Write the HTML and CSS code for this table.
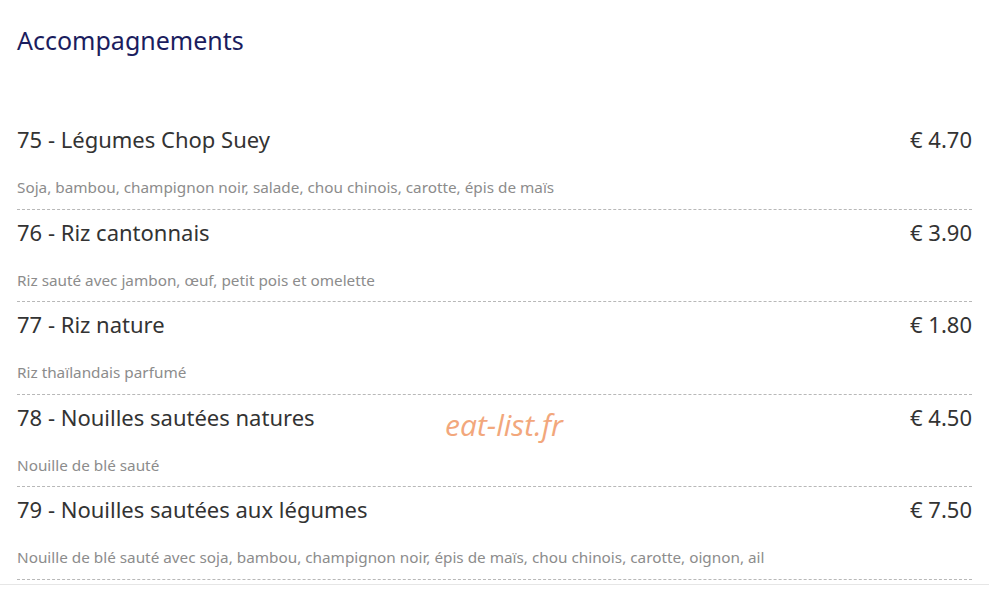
FILE: index.html
```html
<!DOCTYPE html>
<html lang="fr">
<head>
    <meta charset="utf-8">
    <title>Accompagnements</title>
<link rel="stylesheet" href="styles.css">
</head>
<body>
    <section class="categorie">
        <h2>Accompagnements</h2>
        <ul class="plats">
            <li class="plat">
                <div class="plat-ligne"><span class="plat-nom">75 - Légumes Chop Suey</span><span class="plat-prix">€ 4.70</span></div>
                <p class="plat-desc">Soja, bambou, champignon noir, salade, chou chinois, carotte, épis de maïs</p>
            </li>
            <li class="plat">
                <div class="plat-ligne"><span class="plat-nom">76 - Riz cantonnais</span><span class="plat-prix">€ 3.90</span></div>
                <p class="plat-desc">Riz sauté avec jambon, œuf, petit pois et omelette</p>
            </li>
            <li class="plat">
                <div class="plat-ligne"><span class="plat-nom">77 - Riz nature</span><span class="plat-prix">€ 1.80</span></div>
                <p class="plat-desc">Riz thaïlandais parfumé</p>
            </li>
            <li class="plat">
                <div class="plat-ligne"><span class="plat-nom">78 - Nouilles sautées natures</span><span class="plat-prix">€ 4.50</span></div>
                <p class="plat-desc">Nouille de blé sauté</p>
            </li>
            <li class="plat">
                <div class="plat-ligne"><span class="plat-nom">79 - Nouilles sautées aux légumes</span><span class="plat-prix">€ 7.50</span></div>
                <p class="plat-desc">Nouille de blé sauté avec soja, bambou, champignon noir, épis de maïs, chou chinois, carotte, oignon, ail</p>
            </li>
        </ul>
        <span class="watermark">eat-list.fr</span>
    </section>
</body>
</html>
```

FILE: styles.css
```css
body {
    margin: 0;
    background-color: #fff;
    font-family: "Noto Sans", "Open Sans", sans-serif;
}
.categorie {
    position: relative;
    padding: 25px 17px 4px 17px;
    border-bottom: 1px solid #e6e6e6;
}
h2 {
    margin: 0 0 62px 0;
    font-size: 25px;
    line-height: 30px;
    font-weight: normal;
    color: #1b1d5e;
}
.plats {
    list-style: none;
    margin: 0;
    padding: 0;
}
.plat {
    padding: 7px 0 11.5px 0;
    border-bottom: 1px dashed #b8b8b8;
}
.plat-ligne {
    display: flex;
    justify-content: space-between;
    align-items: center;
    height: 30px;
    font-size: 22px;
    color: #333;
}
.plat-desc {
    margin: 23px 0 0 0;
    font-size: 15.3px;
    line-height: 20px;
    color: #8c8c8c;
}
.watermark {
    position: absolute;
    left: 445px;
    top: 404px;
    font-family: "Open Sans", sans-serif;
    font-style: italic;
    font-size: 30px;
    color: #f2a77c;
}
```
